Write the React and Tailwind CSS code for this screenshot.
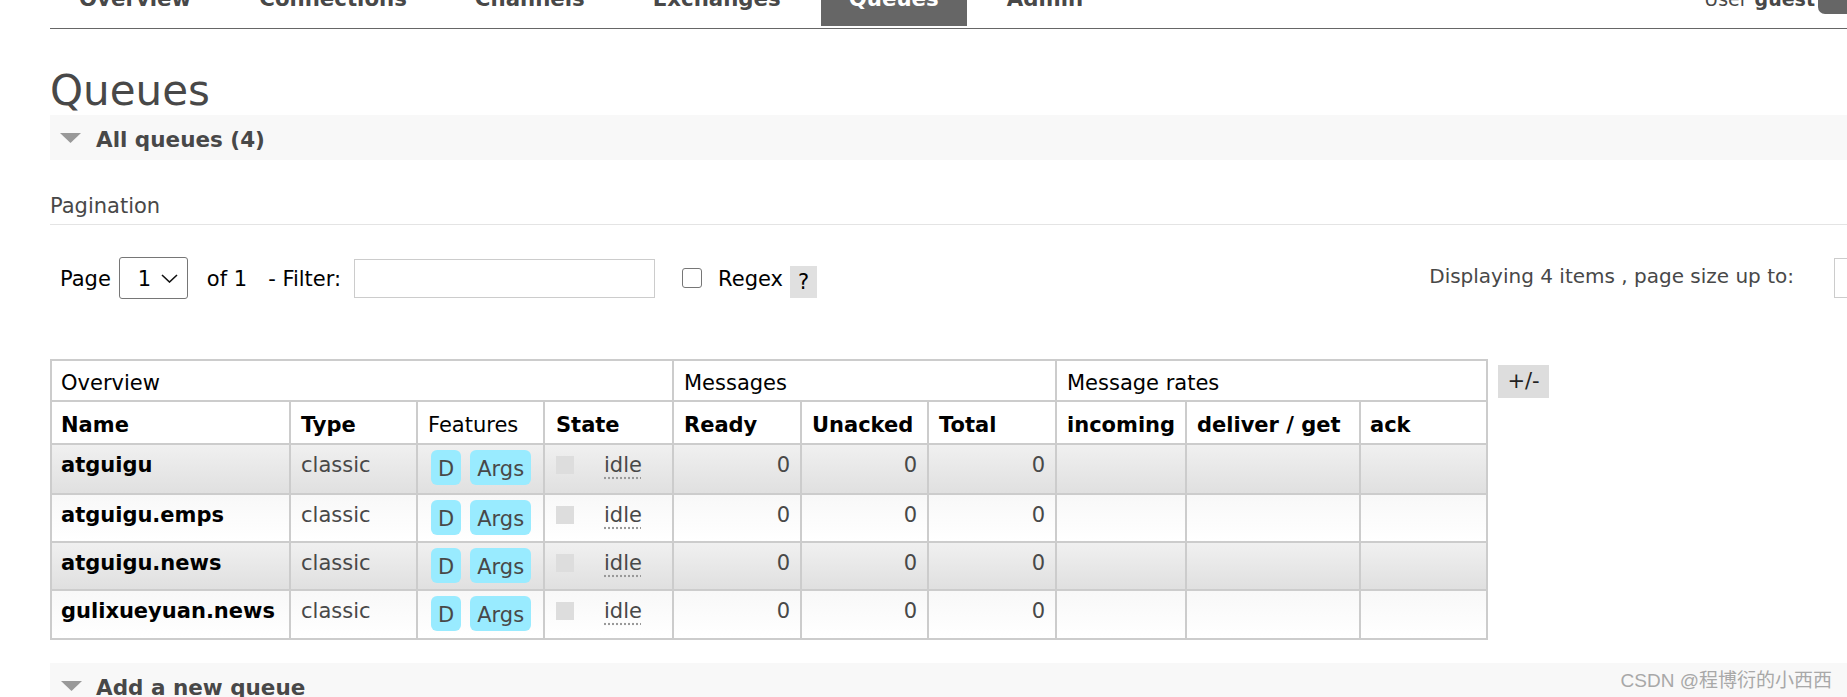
import React from 'react';

const tabs = ['Overview', 'Connections', 'Channels', 'Exchanges', 'Queues', 'Admin'];

const rows = [
  { name: 'atguigu', bg: 'bg-linear-to-b from-[#f0f0f0] to-[#e0e0e0]', h: 'h-[50px]' },
  { name: 'atguigu.emps', bg: 'bg-linear-to-b from-[#f8f8f8] to-[#ffffff]', h: 'h-[48px]' },
  { name: 'atguigu.news', bg: 'bg-linear-to-b from-[#f0f0f0] to-[#e0e0e0]', h: 'h-[48px]' },
  { name: 'gulixueyuan.news', bg: 'bg-linear-to-b from-[#f8f8f8] to-[#ffffff]', h: 'h-[49px]' },
];

function Triangle() {
  return (
    <svg width="21" height="10" viewBox="0 0 21 10" className="shrink-0">
      <polygon points="0,0 21,0 10.5,10" fill="#999999" />
    </svg>
  );
}

function Badge({ children }) {
  return (
    <span className="bg-[#99ebff] rounded-[6px] px-[7px] pt-[7px] pb-[3px] leading-[25px] text-[#484848]">
      {children}
    </span>
  );
}

export default function App() {
  const cell = 'border-r-2 border-b-2 border-[#cccccc]';
  return (
    <div className="relative w-[1847px] h-[697px] overflow-hidden bg-white font-['DejaVu_Sans',Verdana,sans-serif] text-[#484848] text-[21px] leading-[25px]">
      {/* Header / navigation */}
      <div className="ml-[50px] h-[29px] border-b border-[#666666] flex">
        <ul className="flex -mt-[14px] h-[40px] pl-[1px] gap-[12px] text-[21.3px] font-bold leading-[26px]">
          {tabs.map((t) => (
            <li
              key={t}
              className={
                t === 'Queues'
                  ? 'h-[40px] px-[28px] bg-[#666666] text-white'
                  : 'h-[40px] px-[28px] text-[#484848]'
              }
            >
              {t}
            </li>
          ))}
        </ul>
        <div className="ml-auto -mt-[14px] h-[40px] flex items-start leading-[26px] text-[19px]">
          <span>User</span>
          <span className="ml-[7px] font-bold">guest</span>
          <div className="ml-[3px] w-[29px] h-[28px] bg-[#666666] rounded-bl-[7px]" />
        </div>
      </div>

      {/* Main */}
      <div className="pl-[50px]">
        <h1 className="mt-[38px] text-[42px] leading-[48px] font-normal text-[#484848]">Queues</h1>

        <div className="h-[45px] bg-[#f8f8f8] flex items-center pl-[10px]">
          <Triangle />
          <span className="ml-[15px] pt-[3px] font-bold text-[21.5px] text-[#484848]">All queues (4)</span>
        </div>

        <h3 className="mt-[34px] pb-[5px] border-b border-[#e4e4e4] text-[21px] leading-[25px] font-normal">
          Pagination
        </h3>

        <div className="mt-[32px] h-[42px] flex items-center -mr-[50px]">
          <span className="ml-[10px] pt-[3px] text-black">Page</span>
          <div className="ml-[8px] w-[69px] h-[42px] border border-[#767676] rounded-[3px] flex items-center bg-white text-black">
            <span className="pl-[18px] pt-[2px]">1</span>
            <svg width="17" height="9" viewBox="0 0 17 9" className="ml-[10px]">
              <polyline points="1,1 8.5,8 16,1" fill="none" stroke="#111111" strokeWidth="1.6" />
            </svg>
          </div>
          <span className="ml-[19px] pt-[3px] text-black">of 1</span>
          <span className="ml-[21px] pt-[3px] text-black">- Filter:</span>
          <div className="ml-[13px] w-[301px] h-[39px] border border-[#cccccc] bg-white" />
          <div className="ml-[27px] w-[20px] h-[20px] border border-[#767676] rounded-[3px] bg-white" />
          <span className="ml-[16px] pt-[3px] text-black">Regex</span>
          <div className="ml-[7px] mt-[8px] w-[27px] h-[32px] bg-[#e0e0e0] flex items-center justify-center text-black">
            ?
          </div>
          <div className="ml-auto flex items-center">
            <span className="text-[20px] pb-[3px] text-[#484848]">Displaying 4 items , page size up to:</span>
            <div className="ml-[40px] w-[63px] h-[40px] border border-[#cccccc] bg-white" />
          </div>
        </div>

        {/* Table */}
        <div className="mt-[60px] flex items-start">
          <div className="grid grid-cols-[239px_127px_127px_129px_128px_127px_128px_130px_174px_127px] border-l-2 border-t-2 border-[#cccccc] text-black">
            <div className={`col-span-4 h-[41px] pl-[9px] pt-[10px] ${cell}`}>Overview</div>
            <div className={`col-span-3 h-[41px] pl-[10px] pt-[10px] ${cell}`}>Messages</div>
            <div className={`col-span-3 h-[41px] pl-[10px] pt-[10px] ${cell}`}>Message rates</div>

            <div className={`h-[43px] pl-[9px] pt-[11px] font-bold ${cell}`}>Name</div>
            <div className={`h-[43px] pl-[10px] pt-[11px] font-bold ${cell}`}>Type</div>
            <div className={`h-[43px] pl-[10px] pt-[11px] ${cell}`}>Features</div>
            <div className={`h-[43px] pl-[11px] pt-[11px] font-bold ${cell}`}>State</div>
            <div className={`h-[43px] pl-[10px] pt-[11px] font-bold ${cell}`}>Ready</div>
            <div className={`h-[43px] pl-[10px] pt-[11px] font-bold ${cell}`}>Unacked</div>
            <div className={`h-[43px] pl-[10px] pt-[11px] font-bold ${cell}`}>Total</div>
            <div className={`h-[43px] pl-[10px] pt-[11px] font-bold ${cell}`}>incoming</div>
            <div className={`h-[43px] pl-[10px] pt-[11px] font-bold ${cell}`}>deliver / get</div>
            <div className={`h-[43px] pl-[9px] pt-[11px] font-bold ${cell}`}>ack</div>

            {rows.map((r) => (
              <React.Fragment key={r.name}>
                <div className={`${r.h} ${r.bg} pl-[9px] pt-[8px] font-bold text-black ${cell}`}>{r.name}</div>
                <div className={`${r.h} ${r.bg} pl-[10px] pt-[8px] text-[#484848] ${cell}`}>classic</div>
                <div className={`${r.h} ${r.bg} pl-[13px] pt-[5px] flex items-start gap-[9px] ${cell}`}>
                  <Badge>D</Badge>
                  <Badge>Args</Badge>
                </div>
                <div className={`${r.h} ${r.bg} pl-[11px] flex items-start ${cell}`}>
                  <div className="mt-[11px] w-[18px] h-[18px] bg-[#dddddd]" />
                  <span className="ml-[30px] mt-[8px] text-[#484848] underline decoration-dotted decoration-[#999999] underline-offset-[5px]">
                    idle
                  </span>
                </div>
                <div className={`${r.h} ${r.bg} pr-[10px] pt-[8px] text-right text-[#484848] ${cell}`}>0</div>
                <div className={`${r.h} ${r.bg} pr-[10px] pt-[8px] text-right text-[#484848] ${cell}`}>0</div>
                <div className={`${r.h} ${r.bg} pr-[10px] pt-[8px] text-right text-[#484848] ${cell}`}>0</div>
                <div className={`${r.h} ${r.bg} ${cell}`} />
                <div className={`${r.h} ${r.bg} ${cell}`} />
                <div className={`${r.h} ${r.bg} ${cell}`} />
              </React.Fragment>
            ))}
          </div>
          <div className="ml-[10px] mt-[6px] w-[51px] h-[33px] bg-[#dddddd] flex items-center justify-center text-[#222222]">
            +/-
          </div>
        </div>

        <div className="mt-[23px] h-[45px] bg-[#f8f8f8] flex items-center pl-[11px]">
          <Triangle />
          <span className="ml-[14px] pt-[3px] font-bold text-[21.5px] text-[#484848]">Add a new queue</span>
        </div>
      </div>

      {/* Watermark */}
      <div className="absolute right-[15px] bottom-[4px] font-['Liberation_Sans','Noto_Sans_CJK_SC',sans-serif] text-[19px] leading-[24px] text-[#a8a8a8]">
        CSDN @程博衍的小西西
      </div>
    </div>
  );
}
